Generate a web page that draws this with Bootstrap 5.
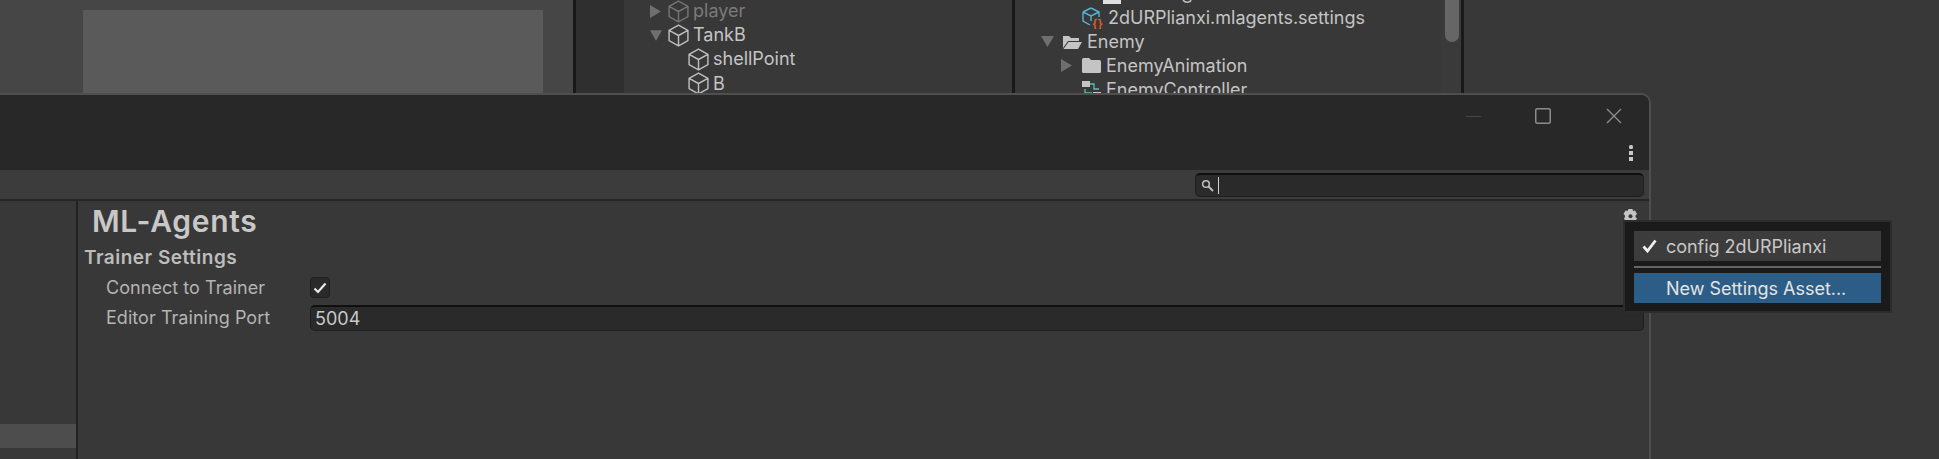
<!DOCTYPE html>
<html>
  <head>
    <meta charset="utf-8"/>
    <title>Project Settings - ML-Agents</title>
    <link href="https://cdn.jsdelivr.net/npm/bootstrap@5.3.0/dist/css/bootstrap.min.css" rel="stylesheet"/>
    <style>
      body { background: #383838; font-family: Inter, "Liberation Sans", sans-serif; font-size: 18px; color: #c4c4c4; width: 1939px; height: 459px; overflow: hidden; position: relative; }

      /* windows behind the dialog */
      .pane { position: absolute; top: 0; height: 94px; overflow: hidden; }
      .scene-pane { left: 0; width: 573px; background: #464646; padding: 10px 0 0 83px; }
      .scene-view { width: 460px; height: 100%; background: #5a5a5a; }
      .split { position: absolute; top: 0; height: 94px; width: 3px; background: #191919; }
      .split-scene { left: 573px; }
      .split-hier { left: 1012px; }
      .split-proj { left: 1461px; }
      .hier-gutter { left: 576px; width: 48px; background: #2f2f2f; }
      .hier-pane { left: 650px; width: 360px; top: -1px; height: 95px; }
      .proj-pane { left: 1041px; width: 400px; top: -18px; height: 112px; }
      .proj-pane .tree-row { height: 23.9px; }
      .scroll-track { position: absolute; top: 0; left: 1441px; width: 20px; height: 94px; background: #3a3a3a; }
      .scroll-thumb { position: absolute; top: 0; left: 1445px; width: 14px; height: 42px; background: #666; border-radius: 0 0 7px 7px; }

      .tree-row { height: 24.2px; white-space: nowrap; line-height: 1; }
      .tree-slot { width: 18px; flex: none; }
      .proj-pane .tree-slot { width: 21px; }
      .tree-lvl { padding-left: 20px; }
      .tree-slot svg { display: block; }
      .tree-ico { flex: none; margin-right: 5px; display: block; }
      .tree-cube { width: 21px; height: 23px; margin-right: 4px; color: #bcbcbc; }
      .tree-dim { color: #7a7a7a; }
      .tree-dim .tree-cube { color: #737373; }
      .stub-ico { margin-left: 21px; margin-right: 61px; align-self: flex-end; margin-bottom: 2px; }
      .stub-tail { flex: none; align-self: flex-end; margin-bottom: 2px; }

      /* main dialog */
      .dlg { position: absolute; left: -4px; top: 93px; width: 1655px; height: 380px; background: #383838; border: 2px solid #4f4f4f; border-radius: 0 10px 0 0; overflow: hidden; }
      .dlg-title { height: 75px; background: #282828; }
      .win-btns { height: 42px; padding-right: 27px; gap: 53px; }
      .win-min { width: 15px; height: 1px; background: #464646; margin-right: 1px; }
      .btn-max { margin-right: 2px; }
      .dots-row { height: 33px; padding-right: 16px; padding-bottom: 9px; }
      .dlg-tools { height: 31px; background: #3c3c3c; border-bottom: 2px solid #252525; padding: 3px 5px 3px 0; }
      .search-box { width: 449px; height: 24px; background: #2a2a2a; border: 1px solid #1f1f1f; border-top: 2px solid #0f0f0f; border-radius: 5px; padding-left: 5px; }
      .caret-bar { width: 1px; height: 17px; background: #d0d0d0; margin-left: 4px; }
      .dlg-body { height: 280px; }
      .side-nav { width: 80px; flex: none; border-right: 2px solid #222; padding-top: 223px; }
      .side-sel { height: 24px; background: #4d4d4d; }
      .dlg-main { padding: 2px 5px 0 6px; }
      .page-title { font-size: 30px; line-height: 36px; font-weight: 600; color: #c8c8c8; padding-left: 8px; margin: 0; letter-spacing: .7px; }
      .gear-btn { position: absolute; left: 1623px; top: 209px; }
      .sec-title { font-size: 19px; line-height: 24px; font-weight: 600; color: #bdbdbd; margin: 7px 0 0; letter-spacing: .5px; }
      .prop-row { height: 27px; padding-left: 22px; margin-top: 3px; }
      .prop-first { margin-top: 4px; }
      .prop-label { width: 204px; flex: none; color: #b4b4b4; font-size: 18px; letter-spacing: .05px; }
      .chk-box { width: 20px; height: 21px; background: #2a2a2a; border: 1px solid #1f1f1f; border-radius: 4px; }
      .port-input.form-control { height: 26px; min-height: 0; background: #2a2a2a; border: 1px solid #1f1f1f; border-top: 2px solid #0f0f0f; border-radius: 5px; color: #c8c8c8; font-size: 18px; padding: 0 0 0 4px; box-shadow: none; }

      /* popup over the dialog */
      .asset-menu.dropdown-menu { position: absolute; left: 1623px; top: 220px; width: 269px; height: 93px; margin: 0; padding: 9px 9px; background: #1a1a1a; border: 2px solid #2c2c2c; border-radius: 0; display: block; }
      .asset-menu .dropdown-item { height: 30px; padding: 0 0 0 32px; line-height: 31px; font-size: 18px; letter-spacing: -.03px; color: #c8c8c8; background: #3c3c3c; position: relative; }
      .asset-menu .dropdown-item.active { background: #2c5d87; color: #e4e4e4; }
      .asset-menu .dropdown-divider { margin: 5px 0; border-top: 2px solid #666; opacity: 1; }
      .menu-check { position: absolute; left: 8px; top: 8px; }
    </style>
  </head>
  <body>
    <svg width="0" height="0" class="position-absolute">
      <symbol id="cube" viewBox="0 0 20 22">
        <path d="M10 1 19 6v10l-9 5-9-5V6zM1 6l9 5 9-5M10 11v10" fill="none" stroke="currentColor" stroke-width="1.4" stroke-linejoin="round"/>
      </symbol>
      <symbol id="arrow-right" viewBox="0 0 12 14"><path d="M0 0 12 7 0 14z" fill="#6f6f6f"/></symbol>
      <symbol id="arrow-down" viewBox="0 0 14 12"><path d="M0 0H14L7 12z" fill="#6f6f6f"/></symbol>
    </svg>

    <div class="pane scene-pane"><div class="scene-view"></div></div>
    <div class="split split-scene"></div>
    <div class="pane hier-gutter"></div>
    <div class="pane hier-pane">
      <div class="tree-row d-flex align-items-center tree-dim">
        <span class="tree-slot"><svg width="11" height="13"><use href="#arrow-right"/></svg></span>
        <svg class="tree-ico tree-cube"><use href="#cube"/></svg>player
      </div>
      <div class="tree-row d-flex align-items-center">
        <span class="tree-slot"><svg width="12" height="11"><use href="#arrow-down"/></svg></span>
        <svg class="tree-ico tree-cube"><use href="#cube"/></svg>TankB
      </div>
      <div class="tree-row d-flex align-items-center tree-lvl">
        <span class="tree-slot"></span>
        <svg class="tree-ico tree-cube"><use href="#cube"/></svg>shellPoint
      </div>
      <div class="tree-row d-flex align-items-center tree-lvl">
        <span class="tree-slot"></span>
        <svg class="tree-ico tree-cube"><use href="#cube"/></svg>B
      </div>
    </div>
    <div class="split split-hier"></div>

    <div class="pane proj-pane">
      <!-- row scrolled out above the pane: only its icon's foot and a descender remain -->
      <div class="tree-row d-flex tree-lvl">
        <span class="tree-slot"></span>
        <svg class="tree-ico stub-ico" width="18" height="5"><rect width="18" height="5" fill="#e0e0e0"/></svg>
        <svg class="stub-tail" width="10" height="5"><path d="M1 1c2 3 7 3 8 0" fill="none" stroke="#bcbcbc" stroke-width="1.6"/></svg>
      </div>
      <div class="tree-row d-flex align-items-center tree-lvl">
        <span class="tree-slot"></span>
        <svg class="tree-ico" width="21" height="22" viewBox="0 0 21 22">
          <path d="M9 1 17 5v5M1 5l8-4M1 5v9l7 4M1 5l8 4 8-4M9 9v5" fill="none" stroke="#58b3d6" stroke-width="1.4"/>
          <text x="10" y="21" font-family="Inter, sans-serif" font-size="12" font-weight="600" fill="#e2592f">{}</text>
        </svg>2dURPlianxi.mlagents.settings
      </div>
      <div class="tree-row d-flex align-items-center">
        <span class="tree-slot"><svg width="13" height="11"><use href="#arrow-down"/></svg></span>
        <svg class="tree-ico" width="20" height="16" viewBox="0 0 20 16">
          <path d="M1 14V2h6l2 2h8v3H6L1 14zM6.500 8H20l-4 7H1.500z" fill="#c4c4c4"/>
        </svg>Enemy
      </div>
      <div class="tree-row d-flex align-items-center tree-lvl">
        <span class="tree-slot"><svg width="11" height="13"><use href="#arrow-right"/></svg></span>
        <svg class="tree-ico" width="19" height="15" viewBox="0 0 19 15">
          <path d="M0 1.500Q0 0 1.500 0H7l2 2h8.500Q19 2 19 3.500V13.500Q19 15 17.500 15H1.500Q0 15 0 13.500z" fill="#c4c4c4"/>
        </svg>EnemyAnimation
      </div>
      <div class="tree-row d-flex align-items-center tree-lvl">
        <span class="tree-slot"></span>
        <svg class="tree-ico" width="19" height="18" viewBox="0 0 19 18">
          <rect x="0" y="0" width="8" height="6" fill="#c4c4c4"/>
          <rect x="11" y="11" width="8" height="6" fill="#c4c4c4"/>
          <path d="M3 8v4h7M8 3h4v5h5" fill="none" stroke="#4fc4b4" stroke-width="1.3"/>
        </svg>EnemyController
      </div>
    </div>
    <div class="scroll-track"></div>
    <div class="scroll-thumb"></div>
    <div class="split split-proj"></div>

    <div class="dlg">
      <div class="dlg-title">
        <div class="win-btns d-flex align-items-center justify-content-end">
          <span class="win-min"></span>
          <svg class="btn-max" width="16" height="16"><rect x=".75" y=".75" width="14.500" height="14.500" rx="1.500" fill="none" stroke="#8c8c8c" stroke-width="1.500"/></svg>
          <svg width="16" height="16"><path d="M1 1 15 15M15 1 1 15" stroke="#8c8c8c" stroke-width="1.400"/></svg>
        </div>
        <div class="dots-row d-flex align-items-end justify-content-end">
          <svg width="4" height="16"><rect y="0" width="4" height="4" rx="1.500" fill="#c8c8c8"/><rect y="6" width="4" height="4" fill="#c8c8c8"/><rect y="12" width="4" height="4" fill="#c8c8c8"/></svg>
        </div>
      </div>
      <div class="dlg-tools d-flex justify-content-end">
        <div class="search-box d-flex align-items-center">
          <svg width="13" height="13" viewBox="0 0 13 13"><circle cx="5" cy="5" r="3.300" fill="none" stroke="#c0c0c0" stroke-width="1.500"/><path d="M7.500 7.500 12 12" stroke="#c0c0c0" stroke-width="1.800"/></svg>
          <span class="caret-bar"></span>
        </div>
      </div>
      <div class="dlg-body d-flex">
        <div class="side-nav"><div class="side-sel"></div></div>
        <div class="dlg-main flex-grow-1">
          <h1 class="page-title">ML-Agents</h1>
          <h2 class="sec-title">Trainer Settings</h2>
          <div class="prop-row prop-first d-flex align-items-center">
            <span class="prop-label">Connect to Trainer</span>
            <span class="chk-box d-flex align-items-center justify-content-center">
              <svg width="14" height="12" viewBox="0 0 14 12"><path d="M1.500 6.500 5 10 12.500 1.500" fill="none" stroke="#eaeaea" stroke-width="2.200"/></svg>
            </span>
          </div>
          <div class="prop-row d-flex align-items-center">
            <label class="prop-label" for="trainingPort">Editor Training Port</label>
            <input class="form-control port-input" id="trainingPort" type="text" value="5004"/>
          </div>
        </div>
      </div>
    </div>

    <svg class="gear-btn" width="15" height="15" viewBox="0 0 15 15">
      <path d="M5.500 0h4l.5 2 2-.5 2 3.500-1.500 1.500V8l1.500 1.500-2 3.500-2-.5-.5 2h-4l-.5-2-2 .5-2-3.500L2 8V6.500L.5 5l2-3.500 2 .5z" fill="#c4c4c4"/>
      <circle cx="7.500" cy="7.200" r="2" fill="#383838"/>
    </svg>

    <div class="dropdown-menu asset-menu">
      <a class="dropdown-item" href="#">
        <svg class="menu-check" width="15" height="14" viewBox="0 0 15 14"><path d="M1.500 7.500 5.500 12 13.500 1.500" fill="none" stroke="#f0f0f0" stroke-width="2.800"/></svg>config 2dURPlianxi
      </a>
      <hr class="dropdown-divider"/>
      <a class="dropdown-item active" href="#">New Settings Asset...</a>
    </div>

    <script src="https://cdn.jsdelivr.net/npm/bootstrap@5.3.0/dist/js/bootstrap.bundle.min.js"></script>
  </body>
</html>
